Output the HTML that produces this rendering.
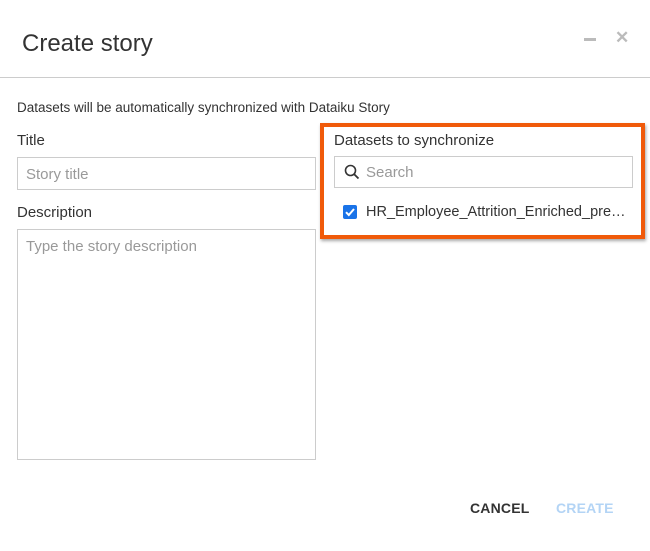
<!DOCTYPE html>
<html><head><style>
body{margin:0;width:650px;height:551px;background:#fff;font-family:"Liberation Sans",sans-serif;color:#333;position:relative;overflow:hidden}
.a{position:absolute;white-space:nowrap}
.inp{position:absolute;border:1px solid #ccc;box-sizing:border-box;color:#999;font-size:15px}
</style></head><body>
<div class="a" style="left:22px;top:30px;font-size:24px;color:#333">Create story</div>
<div class="a" style="left:584px;top:38px;width:12px;height:3px;background:#bbb"></div>
<div class="a" style="left:615px;top:28px;font-size:17px;color:#bbb;font-weight:bold">✕</div>
<div class="a" style="left:0;top:77px;width:650px;height:1px;background:#ccc"></div>
<div class="a" style="left:17px;top:100px;font-size:13.5px;color:#333">Datasets will be automatically synchronized with Dataiku Story</div>
<div class="a" style="left:17px;top:132px;font-size:15px">Title</div>
<div class="inp" style="left:17px;top:157px;width:299px;height:33px;padding:8px 8px">Story title</div>
<div class="a" style="left:17px;top:204px;font-size:15px">Description</div>
<div class="inp" style="left:17px;top:229px;width:299px;height:231px;padding:8px 8px">Type the story description</div>
<div class="a" style="left:320px;top:123px;width:325px;height:116px;border:4px solid #f05a0a;box-sizing:border-box;box-shadow:1px 2px 3px rgba(0,0,0,.35)"></div>
<div class="a" style="left:334px;top:132px;font-size:15px">Datasets to synchronize</div>
<div class="inp" style="left:334px;top:156px;width:299px;height:32px;padding:7px 8px 0 31px">Search</div>
<svg class="a" style="left:344px;top:164px" width="16" height="16" viewBox="0 0 16 16"><circle cx="6.5" cy="6.5" r="5" fill="none" stroke="#333" stroke-width="1.6"/><path d="M10.2 10.2L14.5 14.5" stroke="#333" stroke-width="1.8"/></svg>
<div class="a" style="left:343px;top:205px;width:14px;height:14px;background:#1a73e8;border-radius:2px"></div>
<svg class="a" style="left:343px;top:205px" width="14" height="14" viewBox="0 0 14 14"><path d="M3 7.2L5.8 10L11 4" fill="none" stroke="#fff" stroke-width="2"/></svg>
<div class="a" style="left:366px;top:204px;font-size:14.5px;color:#333;width:262px;overflow:hidden;text-overflow:ellipsis">HR_Employee_Attrition_Enriched_prepared</div>
<div class="a" style="left:470px;top:500px;font-size:14px;font-weight:bold;color:#333;letter-spacing:0.2px">CANCEL</div>
<div class="a" style="left:556px;top:500px;font-size:14px;font-weight:bold;color:#b3d4f5;letter-spacing:0.2px">CREATE</div>
</body></html>
